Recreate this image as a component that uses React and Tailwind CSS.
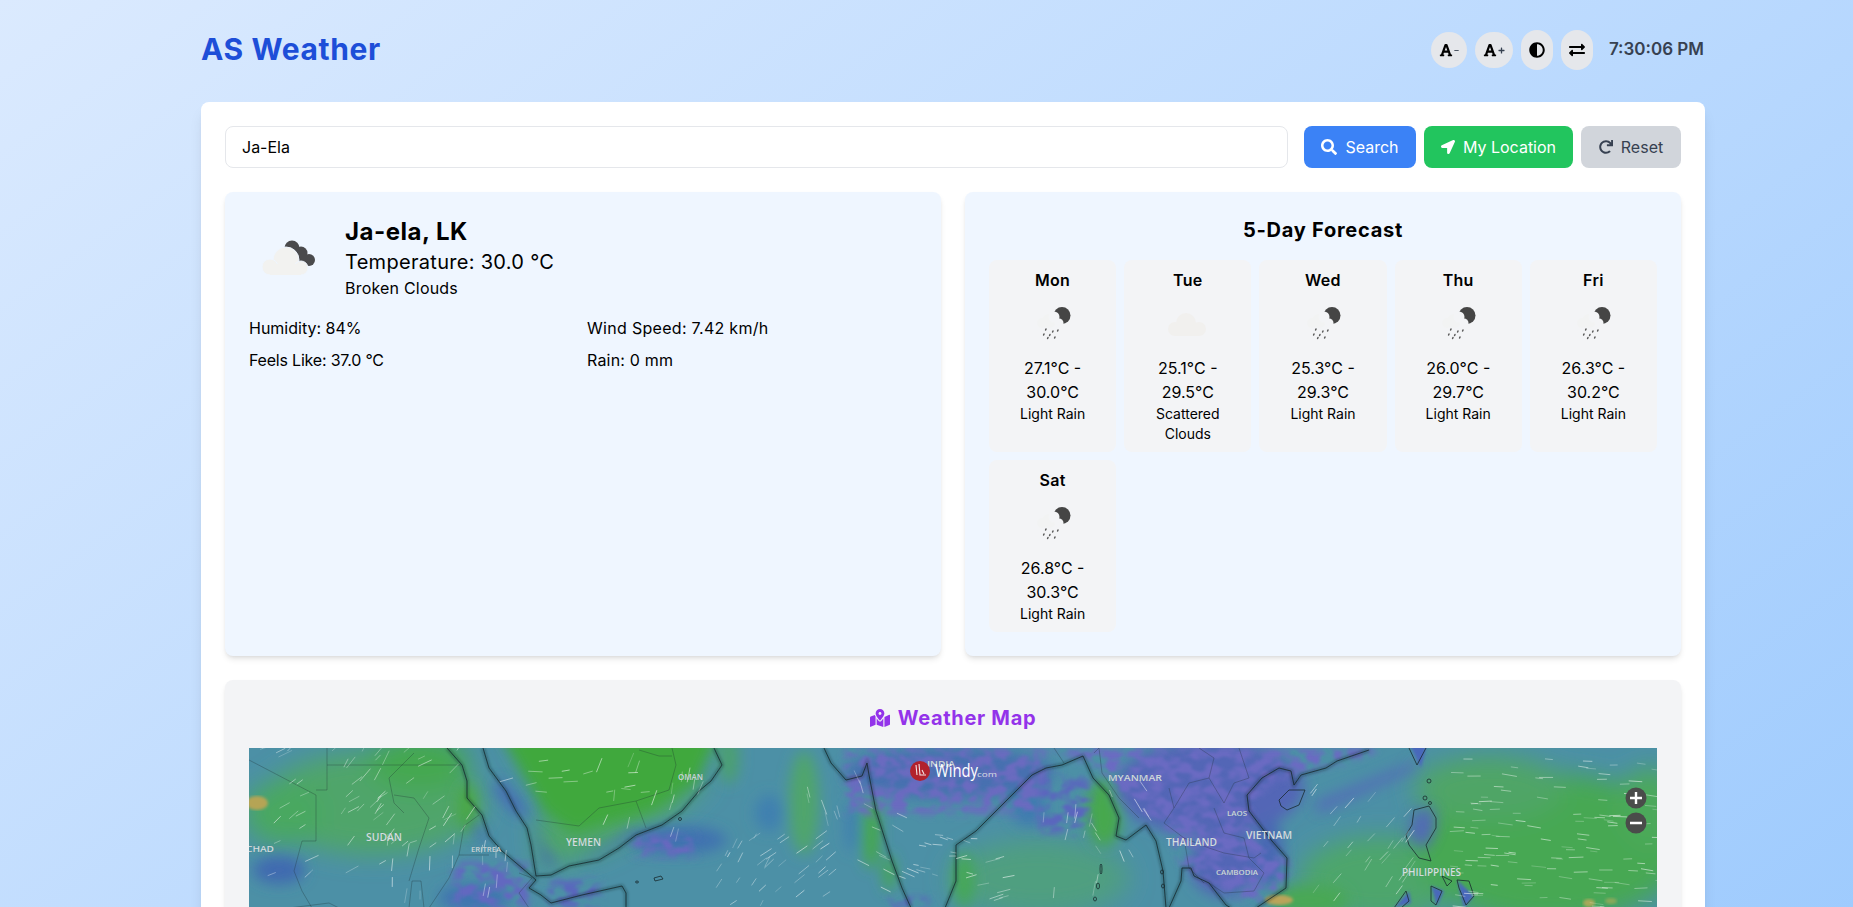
import { FaFont, FaMinus, FaPlus, FaAdjust, FaExchangeAlt, FaSearch, FaLocationArrow, FaRedo, FaMapMarkedAlt } from "react-icons/fa";

const forecast = [
    { day: "Mon", low: "27.1", high: "30.0", desc: "Light Rain", icon: "rain" },
    { day: "Tue", low: "25.1", high: "29.5", desc: "Scattered Clouds", icon: "cloud" },
    { day: "Wed", low: "25.3", high: "29.3", desc: "Light Rain", icon: "rain" },
    { day: "Thu", low: "26.0", high: "29.7", desc: "Light Rain", icon: "rain" },
    { day: "Fri", low: "26.3", high: "30.2", desc: "Light Rain", icon: "rain" },
    { day: "Sat", low: "26.8", high: "30.3", desc: "Light Rain", icon: "rain" },
];

const RainIcon = () => (
    <svg viewBox="0 0 64 64" className="w-16 h-16 mx-auto">
        <g fill="#f2f3f3">
            <circle cx="21" cy="31" r="5" />
            <circle cx="28" cy="29" r="7" />
        </g>
        <circle cx="41" cy="23.5" r="8.5" fill="#454545" />
        <circle cx="33" cy="25" r="5.5" fill="#f3f4f6" />
        <circle cx="38" cy="31" r="4.5" fill="#f3f4f6" />
        <g stroke="#5a5a5a" strokeWidth="1.5" strokeLinecap="round">
            <path d="M25,37 L24.6,38" />
            <path d="M32,39 L31.6,40" />
            <path d="M37,38 L36.6,39" />
            <path d="M23,42 L22.6,43" />
            <path d="M29,42.5 L28.6,43.5" />
            <path d="M27,45.5 L26.6,46.5" />
            <path d="M34,45 L33.6,46" />
        </g>
    </svg>
);

const CloudIcon = () => (
    <svg viewBox="0 0 64 64" className="w-16 h-16 mx-auto">
        <g fill="#f1f0ee">
            <circle cx="19" cy="37" r="7" />
            <circle cx="30" cy="31" r="10" />
            <circle cx="43" cy="37" r="7" />
            <rect x="19" y="36" width="24" height="8" />
        </g>
    </svg>
);

const BrokenIcon = () => (
    <svg viewBox="0 0 80 80" className="w-20 h-20 shrink-0">
        <g fill="#4a4a4c">
            <circle cx="43" cy="30" r="7.5" />
            <circle cx="52" cy="35" r="6.5" />
            <circle cx="60" cy="42" r="6" />
            <rect x="44" y="34" width="14" height="12" />
        </g>
        <g fill="#f2f2f0" stroke="#eff6ff" strokeWidth="1">
            <circle cx="37" cy="42" r="13" />
            <circle cx="21" cy="49" r="8" />
            <circle cx="52" cy="50" r="7" />
            <rect x="21" y="46" width="31" height="11" stroke="none" />
        </g>
    </svg>
);

// small seeded random so the wind streaks stay the same on every load
const makeRandom = (seed) => () => {
    seed = (seed * 1664525 + 1013904223) % 4294967296;
    return seed / 4294967296;
};

const windZones = [
    { x: 0, y: 0, w: 200, h: 130, n: 42, ang: -32, spread: 30, len: 12 },
    { x: 90, y: 0, w: 130, h: 100, n: 22, ang: -55, spread: 20, len: 13 },
    { x: 130, y: 90, w: 130, h: 70, n: 18, ang: -85, spread: 15, len: 12 },
    { x: 240, y: 0, w: 170, h: 45, n: 14, ang: -5, spread: 25, len: 12 },
    { x: 310, y: 15, w: 140, h: 80, n: 16, ang: -75, spread: 20, len: 13 },
    { x: 440, y: 90, w: 90, h: 70, n: 12, ang: -60, spread: 10, len: 9 },
    { x: 480, y: 90, w: 110, h: 70, n: 24, ang: -38, spread: 12, len: 11 },
    { x: 550, y: 20, w: 70, h: 50, n: 8, ang: 72, spread: 14, len: 13 },
    { x: 605, y: 55, w: 55, h: 100, n: 12, ang: 25, spread: 12, len: 11 },
    { x: 660, y: 85, w: 70, h: 50, n: 16, ang: 10, spread: 25, len: 8 },
    { x: 700, y: 100, w: 60, h: 55, n: 10, ang: -15, spread: 10, len: 12 },
    { x: 780, y: 70, w: 70, h: 80, n: 10, ang: -82, spread: 14, len: 12 },
    { x: 835, y: 25, w: 65, h: 90, n: 10, ang: 62, spread: 14, len: 13 },
    { x: 1060, y: 40, w: 100, h: 115, n: 30, ang: -52, spread: 14, len: 12 },
    { x: 1200, y: 10, w: 208, h: 150, n: 120, ang: 3, spread: 14, len: 12 },
];

const streaks = windZones.flatMap((z, i) => {
    const rnd = makeRandom(i * 97 + 11);
    return Array.from({ length: z.n }, () => {
        const x = z.x + rnd() * z.w;
        const y = z.y + rnd() * z.h;
        const a = ((z.ang + (rnd() - 0.5) * z.spread) * Math.PI) / 180;
        const l = z.len * (0.5 + rnd() * 0.7);
        return { x, y, x2: x + Math.cos(a) * l, y2: y + Math.sin(a) * l, o: 0.22 + rnd() * 0.4 };
    });
});

const coasts = [
    "M198,0 L213,17 L218,33 L218,50 L233,67 L240,88 L253,103 L273,120 L287,132 L280,140 L292,147 L302,155 L333,147 L373,138 L377,145 L377,160",
    "M234,0 L240,20 L257,43 L267,63 L278,80 L282,97 L287,128 L302,127 L320,118 L350,112 L370,100 L387,87 L413,77 L433,63 L450,43 L462,33 L473,17 L465,0",
    "M575,0 L582,15 L597,32 L613,28 L618,15 L620,27 L627,63 L643,113 L653,140 L662,160",
    "M696,160 L707,133 L707,97 L727,83 L763,47 L783,27 L797,20 L813,17 L834,8 L844,30 L860,47 L870,70 L867,88 L877,92 L897,77 L907,93 L914,123 L917,160",
    "M920,160 L932,133 L933,120 L942,120 L945,128 L960,135 L977,157 L982,160",
    "M1007,160 L1037,140 L1038,110 L1023,93 L1000,63 L998,47 L1013,30 L1030,20 L1042,23 L1045,37 L1052,27 L1077,20 L1088,13 L1120,2",
    "M1030,52 L1040,42 L1056,42 L1050,57 L1038,62 L1032,58 Z",
    "M1160,0 L1168,17 L1177,0",
    "M1165,62 L1180,58 L1187,70 L1187,80 L1177,97 L1182,113 L1170,110 L1160,97 L1157,87 L1163,77 Z",
    "M1145,160 L1157,143 L1160,153 L1152,160",
    "M1182,138 L1193,143 L1187,157 L1182,153 Z",
    "M1208,132 L1220,133 L1225,148 L1217,157 L1210,140 Z",
    "M1193,128 L1203,133 L1198,138 Z",
    "M1180,33 m-2,0 a2,2 0 1 0 4,0 a2,2 0 1 0 -4,0 M1176,50 m-2,0 a2,2 0 1 0 4,0 a2,2 0 1 0 -4,0 M1181,55 m-1.5,0 a1.5,1.5 0 1 0 3,0 a1.5,1.5 0 1 0 -3,0",
    "M852,121 m-1,0 a1,5 0 1 0 2,0 a1,5 0 1 0 -2,0 M849,138 m-1.5,0 a1.5,3 0 1 0 3,0 a1.5,3 0 1 0 -3,0 M846,151 m-1.5,0 a1.5,2 0 1 0 3,0 a1.5,2 0 1 0 -3,0 M913,124 m-1.5,0 a1.5,2 0 1 0 3,0 a1.5,2 0 1 0 -3,0 M914,138 m-1.5,0 a1.5,2 0 1 0 3,0 a1.5,2 0 1 0 -3,0",
    "M405,130 L412,128 L414,131 L406,133 Z M388,134 m-1.5,0 a1.5,1 0 1 0 3,0 a1.5,1 0 1 0 -3,0 M431,71 m-1.5,0 a1.5,1.5 0 1 0 3,0 a1.5,1.5 0 1 0 -3,0",
];

const borders = [
    "M0,12 L67,47 L67,93 L53,93 L45,123 L53,143 L63,160",
    "M78,0 L78,42 L67,42",
    "M78,17 L212,17",
    "M287,72 L330,78 L350,60 L387,53 L420,42 L427,17 L423,0",
    "M387,53 L397,80",
    "M390,2 L410,8 L423,8",
    "M230,67 L215,78 L210,107 L240,107",
    "M210,107 L200,130 L180,160",
    "M160,160 L163,133 L172,133 L175,160",
    "M40,160 L80,155 L90,160",
    "M270,125 L283,130 L270,145 L280,160",
    "M145,47 L165,50 L180,70 L170,100 L160,133",
    "M140,30 L150,20 L165,5 M140,30 L145,55 L155,65",
    "M805,0 L815,15 M845,5 L850,0 L853,25 L870,50 L890,70",
    "M920,40 L925,60 L915,75 L935,90 L940,120 L955,135",
    "M925,60 L940,35 L960,30 L965,10 L950,0",
    "M960,30 L975,55 L985,35 L1000,30 L990,0",
    "M935,90 L960,100 L975,105 L1005,110 L1012,105",
    "M965,60 L975,85 L995,90 L1000,110 L1015,125 L1005,143",
    "M960,135 L975,145 L1005,143",
];

const labels = [
    { t: "CHAD", x: -3, y: 104, w: 28, s: 9.5 },
    { t: "SUDAN", x: 117, y: 93, w: 36, s: 10 },
    { t: "ERITREA", x: 222, y: 104, w: 30, s: 7 },
    { t: "YEMEN", x: 317, y: 98, w: 35, s: 10 },
    { t: "OMAN", x: 429, y: 32, w: 25, s: 8 },
    { t: "INDIA", x: 678, y: 19, w: 28, s: 8 },
    { t: "MYANMAR", x: 859, y: 33, w: 54, s: 9 },
    { t: "THAILAND", x: 917, y: 98, w: 51, s: 10 },
    { t: "LAOS", x: 978, y: 68, w: 20, s: 7 },
    { t: "VIETNAM", x: 997, y: 91, w: 46, s: 10 },
    { t: "CAMBODIA", x: 967, y: 127, w: 42, s: 7 },
    { t: "PHILIPPINES", x: 1153, y: 128, w: 59, s: 10 },
];

const WeatherMap = () => (
    <svg viewBox="0 0 1408 500" className="w-full h-[500px] block" preserveAspectRatio="xMinYMin slice">
        <defs>
            <filter id="soft" x="-20%" y="-20%" width="140%" height="140%">
                <feGaussianBlur stdDeviation="12" />
            </filter>
            <filter id="soft2" x="-20%" y="-20%" width="140%" height="140%">
                <feGaussianBlur stdDeviation="7" />
            </filter>
            {/* cuts the purple shapes up with noise, the way the model field looks */}
            <filter id="mottle" x="-10%" y="-10%" width="120%" height="120%">
                <feGaussianBlur in="SourceGraphic" stdDeviation="4" result="b" />
                <feTurbulence type="fractalNoise" baseFrequency="0.07 0.1" numOctaves="2" seed="7" result="n" />
                <feColorMatrix in="n" type="matrix" values="0 0 0 0 0  0 0 0 0 0  0 0 0 0 0  4 0 0 0 -1.5" result="m" />
                <feGaussianBlur in="m" stdDeviation="1.2" result="mb" />
                <feComposite in="b" in2="mb" operator="in" />
            </filter>
            <filter id="coastGlow" x="-5%" y="-5%" width="110%" height="110%">
                <feGaussianBlur stdDeviation="1.4" />
            </filter>
            <filter id="streakSoft" x="0" y="0" width="100%" height="100%">
                <feGaussianBlur stdDeviation="0.35" />
            </filter>
        </defs>
        <rect width="1408" height="500" fill="#4c90a6" />
        <g filter="url(#soft)">
            <ellipse cx="125" cy="55" rx="110" ry="52" fill="#4fa56a" />
            <ellipse cx="35" cy="65" rx="40" ry="32" fill="#4aa860" />
            <ellipse cx="170" cy="15" rx="50" ry="28" fill="#45a850" />
            <ellipse cx="790" cy="130" rx="90" ry="38" fill="#4f9f80" />
            <ellipse cx="1130" cy="130" rx="80" ry="42" fill="#4ea66c" />
            <ellipse cx="1300" cy="100" rx="135" ry="75" fill="#47a852" />
            <ellipse cx="1240" cy="40" rx="75" ry="32" fill="#50a566" />
            <ellipse cx="1400" cy="60" rx="30" ry="40" fill="#4ba95a" />
            <path d="M285,70 L290,120 L350,105 L420,70 L465,30 L400,40 Z" fill="#4fa56c" />
        </g>
        <g filter="url(#soft2)">
            <path d="M250,-15 L470,-15 L448,35 L405,62 L325,85 L295,65 Z" fill="#40a83c" />
            <ellipse cx="218" cy="60" rx="9" ry="24" fill="#4aa842" />
            <ellipse cx="555" cy="55" rx="15" ry="52" fill="#4fa56c" />
            <ellipse cx="480" cy="10" rx="10" ry="26" fill="#4ca070" />
            <ellipse cx="622" cy="85" rx="9" ry="36" fill="#45a84c" />
            <ellipse cx="640" cy="125" rx="6" ry="18" fill="#45a84c" />
            <ellipse cx="715" cy="132" rx="10" ry="28" fill="#45a855" />
            <ellipse cx="855" cy="65" rx="18" ry="34" fill="#46a84e" />
            <ellipse cx="1060" cy="152" rx="40" ry="16" fill="#48a855" />
            <ellipse cx="30" cy="122" rx="26" ry="14" fill="#3f6ab0" />
            <ellipse cx="225" cy="150" rx="36" ry="14" fill="#3f74b0" />
            <ellipse cx="430" cy="92" rx="48" ry="14" fill="#3f72b0" />
            <ellipse cx="520" cy="65" rx="14" ry="18" fill="#4080b0" />
            <ellipse cx="603" cy="78" rx="7" ry="26" fill="#4080b0" />
            <ellipse cx="700" cy="25" rx="105" ry="26" fill="#4670b0" />
            <ellipse cx="780" cy="60" rx="18" ry="18" fill="#3f7ab0" />
            <ellipse cx="960" cy="40" rx="95" ry="48" fill="#5266b6" />
            <ellipse cx="975" cy="115" rx="35" ry="34" fill="#5266b6" />
            <ellipse cx="1020" cy="105" rx="14" ry="35" fill="#4a68b4" />
        </g>
        <g filter="url(#soft2)" opacity="0.9">
            <path d="M245,42 L265,65 L282,70 L272,55 L250,30 Z" fill="#4464b8" />
            <path d="M284,75 L296,115 L310,118 L296,100 Z" fill="#4464b8" />
            <path d="M330,115 L395,85 L383,82 L340,108 Z" fill="#4870b8" />
            <path d="M225,70 L238,92 L233,95 L224,80 Z" fill="#4464b8" />
            <path d="M1065,55 L1170,12 L1165,22 L1070,65 Z" fill="#5566bb" />
            <path d="M1165,63 L1185,60 L1186,82 L1178,100 L1170,98 L1158,88 Z" fill="#5266bb" />
        </g>
        <g filter="url(#mottle)">
            <rect x="385" y="88" width="62" height="20" fill="#6868c0" />
            <rect x="205" y="115" width="75" height="45" fill="#6268c0" />
            <rect x="300" y="132" width="50" height="28" fill="#5a66bd" />
            <rect x="597" y="0" width="200" height="66" fill="#6a6ac0" />
            <rect x="790" y="30" width="50" height="55" fill="#5a66bd" />
            <rect x="640" y="150" width="40" height="10" fill="#5a66bd" />
            <path d="M800,0 L1130,0 L1120,8 L1070,20 L1020,35 L1000,60 L1003,85 L1040,115 L1035,140 L1005,155 L960,135 L935,120 L918,80 L870,45 L850,20 Z" fill="#6a6ac2" />
        </g>
        <g filter="url(#coastGlow)">
            <path d="M1160,-5 L1178,-5 L1172,20 Z M1145,160 L1160,143 L1162,155 Z M1182,138 L1195,143 L1188,158 Z M1208,132 L1225,148 L1215,160 Z" fill="#4a68bb" />
        </g>
        <ellipse cx="8" cy="55" rx="11" ry="7" fill="#b5a455" filter="url(#coastGlow)" />
        <ellipse cx="1030" cy="152" rx="14" ry="5" fill="#b9a45a" filter="url(#coastGlow)" />
        <ellipse cx="1340" cy="155" rx="6" ry="4" fill="#a8a95a" filter="url(#coastGlow)" />
        <ellipse cx="1362" cy="153" rx="6" ry="3" fill="#8aa95a" filter="url(#coastGlow)" />

        <g fill="none" stroke="#0f1f20" strokeOpacity="0.35" strokeWidth="3" filter="url(#coastGlow)">
            {coasts.slice(0, 6).map((d) => <path key={d} d={d} />)}
        </g>
        <g fill="none" stroke="#1a2a30" strokeOpacity="0.5" strokeWidth="0.6">
            {borders.map((d) => <path key={d} d={d} />)}
        </g>
        <g fill="none" stroke="#16262a" strokeOpacity="0.85" strokeWidth="0.9">
            {coasts.map((d) => <path key={d} d={d} />)}
        </g>
        <g stroke="#fff" strokeWidth="0.9" strokeLinecap="round" filter="url(#streakSoft)">
            {streaks.map((s, i) => (
                <line key={i} x1={s.x} y1={s.y} x2={s.x2} y2={s.y2} strokeOpacity={s.o} />
            ))}
        </g>
        <g fill="#dfe6e8" fontFamily="'Open Sans', sans-serif" fontWeight="600" stroke="#30505a" strokeOpacity="0.3" strokeWidth="0.3">
            {labels.map((l) => (
                <text key={l.t} x={l.x} y={l.y} fontSize={l.s} textLength={l.w} lengthAdjust="spacingAndGlyphs">{l.t}</text>
            ))}
        </g>
        {/* windy logo */}
        <circle cx="671" cy="23" r="10" fill="#b2222c" />
        <path d="M667,17 L668,27 M670,16 L671,27 L677,27 M673,22 L675,26" stroke="#f3e6e6" strokeWidth="1.1" fill="none" />
        <text x="686" y="29" fontSize="18" fill="#fff" fontFamily="'Open Sans', sans-serif" textLength="43" lengthAdjust="spacingAndGlyphs">Windy</text>
        <text x="728" y="29" fontSize="8" fill="#d5dfe3" fontFamily="'Open Sans', sans-serif" textLength="20" lengthAdjust="spacingAndGlyphs">com</text>
        {/* zoom buttons */}
        <circle cx="1387" cy="50" r="10.5" fill="#4a4c4a" />
        <circle cx="1387" cy="75" r="10.5" fill="#4a4c4a" />
        <path d="M1381,50 H1393 M1387,44 V56 M1381,75 H1393" stroke="#fff" strokeWidth="2.4" />
    </svg>
);

const App = () => {
    return (
        <div className="h-[907px] overflow-hidden">
            <div className="min-h-[1350px] bg-linear-to-br from-[#dbeafe] to-[#93c5fd] pl-[201px] font-['Inter',sans-serif] text-black">
                <div className="w-[1504px]">
                    {/* Header */}
                    <div className="flex items-center justify-between h-[102px] pb-[2px]">
                        <h1 className="text-[30px] font-bold text-[#1d4ed8] tracking-[0.6px] mb-[2px]">AS Weather</h1>
                        <div className="flex items-center gap-2">
                            <button className="flex items-center justify-center w-9 h-9 rounded-full bg-[#e5e7eb]">
                                <FaFont size={14} />
                                <FaMinus size={5} className="ml-px text-[#4b5563]" />
                            </button>
                            <button className="flex items-center justify-center w-[38px] h-9 rounded-full bg-[#e5e7eb]">
                                <FaFont size={14} />
                                <FaPlus size={7} className="ml-px text-[#374151]" />
                            </button>
                            <button className="flex items-center justify-center w-8 h-10 rounded-full bg-[#e5e7eb]">
                                <FaAdjust size={16} />
                            </button>
                            <button className="flex items-center justify-center w-8 h-10 rounded-full bg-[#e5e7eb]">
                                <FaExchangeAlt size={16} />
                            </button>
                            <span className="ml-2 mr-px text-[17px] font-semibold text-[#374151]">7:30:06 PM</span>
                        </div>
                    </div>

                    {/* Main card */}
                    <div className="bg-white rounded-lg shadow-lg p-6">
                        {/* Search row */}
                        <div className="flex gap-4 mb-6">
                            <input
                                type="text"
                                defaultValue="Ja-Ela"
                                className="flex-1 h-[42px] px-4 border border-[#e5e7eb] rounded-lg text-base text-black outline-none"
                            />
                            <div className="flex gap-2">
                                <button className="flex items-center justify-center gap-2 w-[112px] h-[42px] rounded-lg bg-[#3b82f6] text-white text-base">
                                    <FaSearch size={16} />
                                    Search
                                </button>
                                <button className="flex items-center justify-center gap-2 w-[149px] h-[42px] rounded-lg bg-[#22c55e] text-white text-base">
                                    <FaLocationArrow size={14} />
                                    My Location
                                </button>
                                <button className="flex items-center justify-center gap-2 w-[100px] h-[42px] rounded-lg bg-[#d1d5db] text-[#374151] text-base">
                                    <FaRedo size={14} />
                                    Reset
                                </button>
                            </div>
                        </div>

                        {/* Weather panels */}
                        <div className="grid grid-cols-2 gap-6 mb-6">
                            <div className="bg-[#eff6ff] rounded-lg shadow-md p-6">
                                <div className="flex items-center gap-4 mb-4">
                                    <BrokenIcon />
                                    <div>
                                        <h2 className="text-2xl font-bold tracking-[0.5px]">Ja-ela, LK</h2>
                                        <p className="text-xl tracking-[0.3px]">Temperature: 30.0 °C</p>
                                        <p className="text-base tracking-[0.2px]">Broken Clouds</p>
                                    </div>
                                </div>
                                <div className="grid grid-cols-2 gap-2 text-base">
                                    <p>Humidity: 84%</p>
                                    <p className="tracking-[0.3px]">Wind Speed: 7.42 km/h</p>
                                    <p className="tracking-[-0.2px]">Feels Like: 37.0 °C</p>
                                    <p className="tracking-[0.2px]">Rain: 0 mm</p>
                                </div>
                            </div>

                            <div className="bg-[#eff6ff] rounded-lg shadow-md p-6">
                                <h2 className="text-xl font-bold text-center mb-4 tracking-[0.75px]">5-Day Forecast</h2>
                                <div className="grid grid-cols-5 gap-2">
                                    {forecast.map((f) => (
                                        <div key={f.day} className="bg-[#f3f4f6] rounded-lg p-2 text-center">
                                            <p className="font-semibold text-base tracking-[0.3px]">{f.day}</p>
                                            {f.icon === "rain" ? <RainIcon /> : <CloudIcon />}
                                            <p className="text-base">{f.low}°C - {f.high}°C</p>
                                            <p className="text-sm">{f.desc}</p>
                                        </div>
                                    ))}
                                </div>
                            </div>
                        </div>

                        {/* Map */}
                        <div className="bg-[#f3f4f6] rounded-lg shadow-md p-6">
                            <h2 className="flex items-center justify-center gap-2 text-xl font-bold text-[#9333ea] h-7 mb-4 tracking-[0.7px]">
                                <FaMapMarkedAlt size={20} />
                                Weather Map
                            </h2>
                            <WeatherMap />
                        </div>
                    </div>
                </div>
            </div>
        </div>
    );
};

export default App;
